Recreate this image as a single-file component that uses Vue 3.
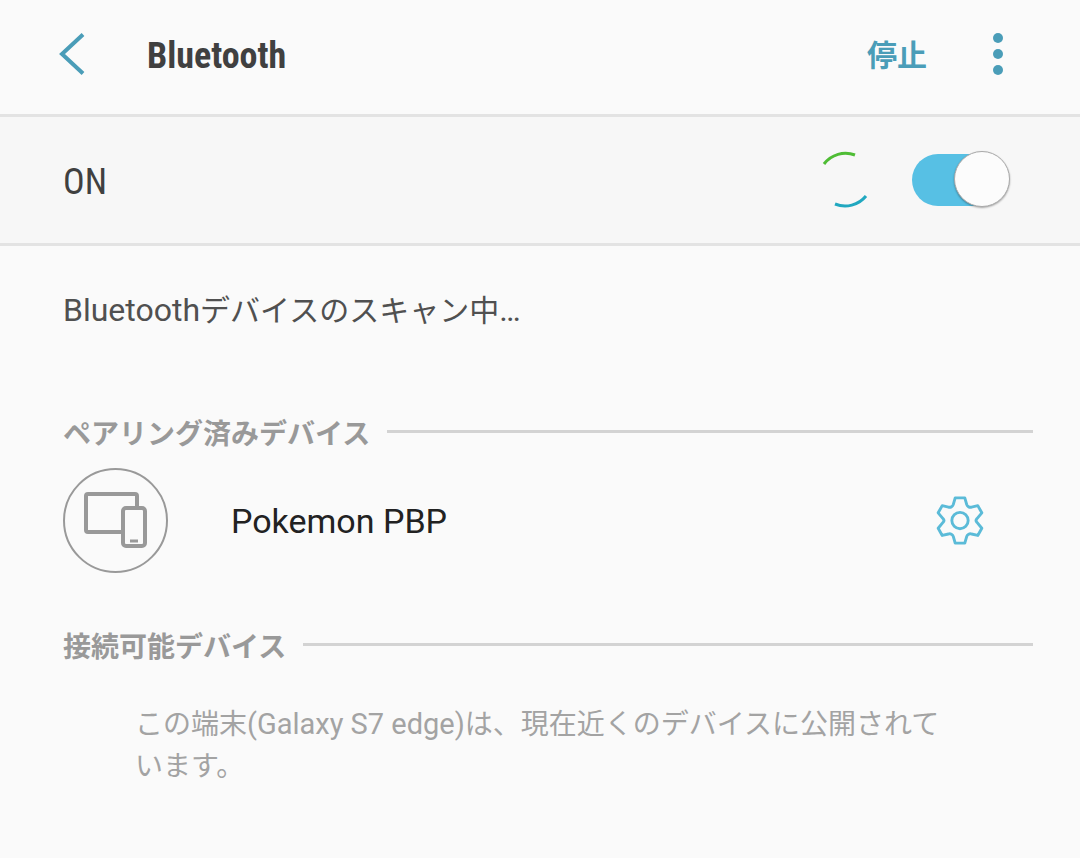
<script setup>
import { ref } from 'vue'

const enabled = ref(true)
</script>

<template>
  <div class="screen">
    <header class="bar">
      <button class="back" type="button" aria-label="戻る">
        <svg width="28" height="44" viewBox="0 0 28 44"><path d="M25 2.500 4 22l21 19.500" fill="none" stroke="#4a9db8" stroke-width="4" /></svg>
      </button>
      <h1>Bluetooth</h1>
      <button class="stop" type="button">停止</button>
      <button class="more" type="button" aria-label="その他">
        <svg width="12" height="44" viewBox="0 0 12 44" fill="#4a9db8"><circle cx="6" cy="6" r="5" /><circle cx="6" cy="22" r="5" /><circle cx="6" cy="38" r="5" /></svg>
      </button>
    </header>

    <section class="power">
      <label for="power">ON</label>
      <svg class="spinner" width="60" height="60" viewBox="0 0 60 60" fill="none" stroke-width="3">
        <path d="M9 14A27 27 0 0 1 40 5" stroke="#4fbd35" />
        <path d="M20 54A27 27 0 0 0 51 46" stroke="#21a8c0" />
      </svg>
      <span class="switch">
        <input id="power" v-model="enabled" type="checkbox" role="switch" />
        <span class="thumb" :class="{ off: !enabled }"></span>
      </span>
    </section>

    <main>
      <p class="status">Bluetooth<span class="ja">デバイスのスキャン中</span>…</p>

      <h2>ペアリング済みデバイス</h2>
      <div class="device">
        <svg class="devices" width="106" height="106" viewBox="0 0 106 106" fill="none" stroke="#999" stroke-width="4">
          <circle cx="52.500" cy="52.500" r="51.500" stroke-width="2" />
          <path d="M59 64H25a2 2 0 0 1-2-2V28a2 2 0 0 1 2-2h47a2 2 0 0 1 2 2v11" />
          <rect x="60" y="40" width="22" height="38" rx="3" />
          <path d="M67 73h8" stroke-width="3" />
        </svg>
        <span class="name">Pokemon PBP</span>
        <button class="settings" type="button" aria-label="設定">
          <svg width="50" height="50" viewBox="-1 -1 52 52" fill="none" stroke="#5bbbd8" stroke-width="3" stroke-linejoin="round">
            <path d="M20 1h10l2 7q.5 1.500 2 2.300t3 .2l6.500-1.500 4.200 7.500-5 6q-2 2 0 4l5 6-4.200 7.500-6.500-1.500q-1.500-.6-3 .2t-2 2.300l-2 7H20l-2-7q-.5-1.500-2-2.300t-3-.2L6.500 40l-4.200-7.500 5-6q2-2 0-4l-5-6L6.500 9l6.500 1.500q1.500.6 3-.2T18 8z" />
            <circle cx="25" cy="24.500" r="8.500" />
          </svg>
        </button>
      </div>

      <h2>接続可能デバイス</h2>
      <p class="note">この端末<span class="latin">(Galaxy S7 edge)</span>は、現在近くのデバイスに公開されています。</p>
    </main>
  </div>
</template>

<style>
body {
  margin: 0;
  background: #fafafa;
}
</style>

<style scoped>
.screen {
  min-height: 100vh;
  background: #fafafa;
  color: #404040;
  font-family: Roboto, "Noto Sans CJK JP", sans-serif;
}

button {
  display: flex;
  padding: 0;
  border: 0;
  background: none;
  font-family: inherit;
  cursor: pointer;
}

.bar {
  display: flex;
  align-items: center;
  height: 108px;
  padding: 0 76px 6px 58px;
  border-bottom: 3px solid #e3e3e3;
}

h1 {
  flex: 1;
  margin: 0 0 0 61px;
  padding-top: 4px;
  font-family: "Roboto Condensed", Roboto, sans-serif;
  font-size: 36px;
  line-height: 44px;
}

.stop {
  margin-right: 65px;
  padding-top: 4px;
  color: #4a9db8;
  font-size: 30px;
  font-weight: 700;
  line-height: 44px;
}

.power {
  display: flex;
  align-items: center;
  height: 126px;
  padding: 0 70px 0 63px;
  border-bottom: 3px solid #e3e3e3;
  background: #f7f7f7;
}

.power label {
  flex: 1;
  padding-top: 4px;
  font-family: "Roboto Condensed", Roboto, sans-serif;
  font-size: 36px;
}

.spinner {
  margin-right: 37px;
}

.switch {
  position: relative;
  display: flex;
  align-items: center;
  width: 98px;
  height: 60px;
}

.switch input {
  width: 96px;
  height: 52px;
  margin: 0;
  border-radius: 26px;
  background: #b5b5b5;
  appearance: none;
}

.switch input:checked {
  background: #57c0e4;
}

.thumb {
  position: absolute;
  top: 1px;
  right: 0;
  box-sizing: border-box;
  width: 56px;
  height: 56px;
  border: 1px solid #aaa;
  border-radius: 50%;
  background: #fcfcfc;
  box-shadow: 0 1px 2px #0005;
  pointer-events: none;
}

.thumb.off {
  right: 42px;
}

main {
  padding: 42px 47px 0 63px;
}

.status {
  margin: 0 0 80px;
  color: #505050;
  font-size: 32px;
  line-height: 44px;
}

.ja {
  font-size: 30px;
}

h2 {
  display: flex;
  align-items: center;
  gap: 17px;
  margin: 0;
  color: #999;
  font-size: 28px;
  line-height: 44px;
}

h2::after {
  flex: 1;
  height: 3px;
  margin-bottom: 8px;
  background: #d3d3d3;
  content: "";
}

.device {
  display: flex;
  align-items: center;
  gap: 62px;
  margin: 11px 0 52px;
  padding-right: 48px;
}

.name {
  flex: 1;
  color: #222;
  font-size: 34px;
}

.note {
  margin: 33px 90px 0 72px;
  color: #a3a3a3;
  font-size: 28px;
  line-height: 42px;
}

.latin {
  font-size: 29px;
}
</style>
